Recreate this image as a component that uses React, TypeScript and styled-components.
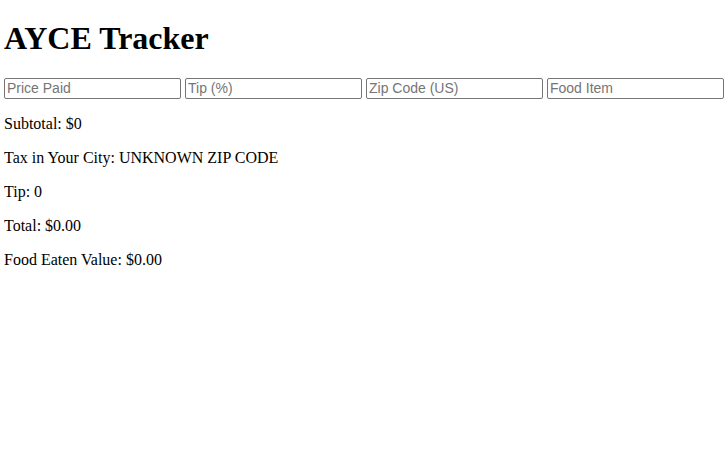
import React from "react";
import styled, { createGlobalStyle } from "styled-components";

const Global = createGlobalStyle`
  body {
    margin: 4px;
    font-family: "Liberation Serif", "Times New Roman", serif;
    font-size: 16px;
    color: #000;
    background: #fff;
  }
`;

const Title = styled.h1`
  font-size: 32px;
  font-weight: bold;
  line-height: 37px;
  margin: 15.5px 0 21.44px;
`;

const InputRow = styled.div`
  display: grid;
  grid-template-columns: repeat(4, 1fr);
  gap: 4px;
`;

const Field = styled.input`
  box-sizing: border-box;
  width: 100%;
  height: 21px;
  padding: 1px 2px;
  border: 1px solid #767676;
  border-radius: 2px;
  font-family: "Liberation Sans", Arial, sans-serif;
  font-size: 14px;
  color: #000;
  background: #fff;
  &::placeholder {
    color: #757575;
  }
`;

const Line = styled.p`
  margin: 16px 0;
  line-height: 18px;
`;

export default function App() {
  return (
    <>
      <Global />
      <Title>AYCE Tracker</Title>
      <InputRow>
        <Field placeholder="Price Paid" />
        <Field placeholder="Tip (%)" />
        <Field placeholder="Zip Code (US)" />
        <Field placeholder="Food Item" />
      </InputRow>
      <Line>Subtotal: $0</Line>
      <Line>Tax in Your City: UNKNOWN ZIP CODE</Line>
      <Line>Tip: 0</Line>
      <Line>Total: $0.00</Line>
      <Line>Food Eaten Value: $0.00</Line>
    </>
  );
}
